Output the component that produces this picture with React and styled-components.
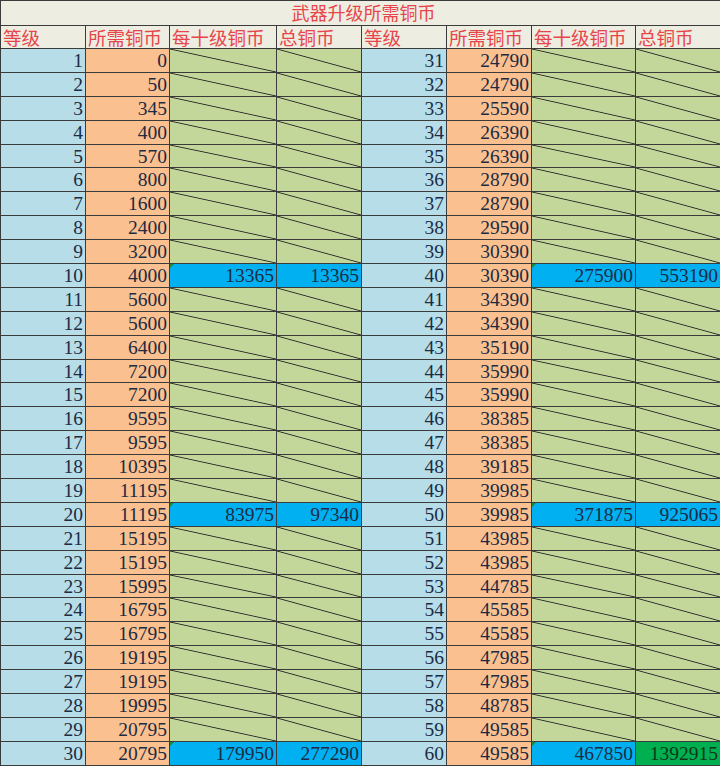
import React from "react";
import styled, { createGlobalStyle, css } from "styled-components";

const Global = createGlobalStyle`
  html, body { margin: 0; padding: 0; background: #ffffff; }
  * { box-sizing: border-box; }
`;

const LINE = "#3b3b3b";

const Sheet = styled.div`
  width: 720px;
  display: grid;
  grid-template-columns: 85px 84px 107px 85px 85px 85px 104px 85px;
  grid-template-rows: 25px 23px repeat(30, 23.9px);
  border-top: 1px solid ${LINE};
  border-left: 1px solid ${LINE};
`;

const Title = styled.div`
  grid-column: 1 / -1;
  background: #eeede2;
  border-right: 1px solid ${LINE};
  border-bottom: 1px solid ${LINE};
  color: #e8454a;
  font-family: "Noto Sans CJK SC", sans-serif;
  font-size: 18px;
  line-height: 23px;
  text-align: center;
  padding-left: 6px;
`;

const Head = styled.div`
  background: #eeede2;
  border-right: 1px solid ${LINE};
  border-bottom: 1px solid ${LINE};
  color: #e8454a;
  font-family: "Noto Sans CJK SC", sans-serif;
  font-size: 18.5px;
  line-height: 23px;
  padding-left: 2px;
  white-space: nowrap;
`;

const bgs = {
  level: "#b7dde8",
  cost: "#fac08f",
  empty: "#c4d79b",
  sum: "#00b0f0",
  grand: "#00b050",
};

const Cell = styled.div`
  position: relative;
  background: ${(p) => bgs[p.$kind]};
  border-right: 1px solid ${LINE};
  border-bottom: 1px solid ${LINE};
  color: ${(p) => (p.$kind === "grand" ? "#0e3a18" : "#1c2b44")};
  font-family: "Liberation Serif", "Times New Roman", serif;
  font-size: 19.5px;
  line-height: 23px;
  text-align: right;
  padding-right: 2px;
  white-space: nowrap;
  ${(p) =>
    p.$kind === "empty" &&
    css`
      background-image: linear-gradient(
        to top right,
        transparent calc(50% - 0.9px),
        #2a2a2a 50%,
        transparent calc(50% + 0.9px)
      );
    `}
  ${(p) =>
    p.$mark &&
    css`
      &::before {
        content: "";
        position: absolute;
        left: 0;
        top: 0;
        border-top: 4px solid #1e8a2e;
        border-right: 4px solid transparent;
      }
    `}
`;

const left = [0, 50, 345, 400, 570, 800, 1600, 2400, 3200, 4000, 5600, 5600, 6400, 7200, 7200, 9595, 9595, 10395, 11195, 11195, 15195, 15195, 15995, 16795, 16795, 19195, 19195, 19995, 20795, 20795];
const right = [24790, 24790, 25590, 26390, 26390, 28790, 28790, 29590, 30390, 30390, 34390, 34390, 35190, 35990, 35990, 38385, 38385, 39185, 39985, 39985, 43985, 43985, 44785, 45585, 45585, 47985, 47985, 48785, 49585, 49585];

const sums = {
  10: [13365, 13365],
  20: [83975, 97340],
  30: [179950, 277290],
  40: [275900, 553190],
  50: [371875, 925065],
  60: [467850, 1392915],
};

const headers = ["等级", "所需铜币", "每十级铜币", "总铜币", "等级", "所需铜币", "每十级铜币", "总铜币"];

function Group({ level, cost }) {
  const s = sums[level];
  return (
    <>
      <Cell $kind="level">{level}</Cell>
      <Cell $kind="cost">{cost}</Cell>
      {s ? (
        <>
          <Cell $kind="sum" $mark>{s[0]}</Cell>
          <Cell $kind={level === 60 ? "grand" : "sum"}>{s[1]}</Cell>
        </>
      ) : (
        <>
          <Cell $kind="empty" />
          <Cell $kind="empty" />
        </>
      )}
    </>
  );
}

export default function App() {
  return (
    <>
      <Global />
      <Sheet>
        <Title>武器升级所需铜币</Title>
        {headers.map((h, i) => (
          <Head key={i}>{h}</Head>
        ))}
        {left.map((c, i) => (
          <React.Fragment key={i}>
            <Group level={i + 1} cost={c} />
            <Group level={i + 31} cost={right[i]} />
          </React.Fragment>
        ))}
      </Sheet>
    </>
  );
}
